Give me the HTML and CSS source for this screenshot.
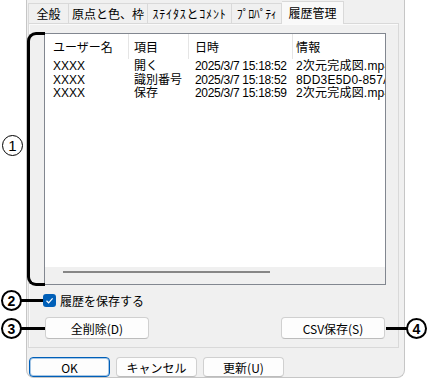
FILE: index.html
```html
<!DOCTYPE html>
<html lang="ja">
<head>
    <meta charset="UTF-8">
    <title>履歴管理</title>
    <link rel="stylesheet" href="styles.css">
</head>
<body>
    <div class="stage">
        <div class="dialog">
            <div class="tabs">
                <div class="tab">全般</div>
                <div class="tab">原点と色、枠</div>
                <div class="tab">ｽﾃｲﾀｽとｺﾒﾝﾄ</div>
                <div class="tab">ﾌﾟﾛﾊﾟﾃｨ</div>
                <div class="tab active">履歴管理</div>
            </div>
            <div class="panel">
                <div class="list">
                    <div class="row list-head">
                        <span>ユーザー名</span><span>項目</span><span>日時</span><span>情報</span>
                    </div>
                    <div class="list-body">
                        <div class="row">
                            <span>XXXX</span><span>開く</span><span class="date">2025/3/7 15:18:52</span><span>2次元完成図.mp4</span>
                        </div>
                        <div class="row">
                            <span>XXXX</span><span>識別番号</span><span class="date">2025/3/7 15:18:52</span><span>8DD3E5D0-857A-4C2B</span>
                        </div>
                        <div class="row">
                            <span>XXXX</span><span>保存</span><span class="date">2025/3/7 15:18:59</span><span>2次元完成図.mp4</span>
                        </div>
                    </div>
                    <div class="hscroll"><div class="thumb"></div></div>
                </div>
                <label class="check">
                    <span class="box">
                        <svg width="9" height="9" viewBox="0 0 9 9"><path d="M1.5 4.8 L3.6 6.8 L7.6 2.4" fill="none" stroke="#fff" stroke-width="1.2"/></svg>
                    </span>
                    履歴を保存する
                </label>
                <div class="actions">
                    <button class="btn wide">全削除(D)</button>
                    <button class="btn wide">CSV保存(S)</button>
                </div>
            </div>
            <div class="footer">
                <button class="btn default">OK</button>
                <button class="btn">キャンセル</button>
                <button class="btn">更新(U)</button>
            </div>
        </div>

        <!-- annotation marks -->
        <div class="bracket"></div>
        <span class="num thin n1">1</span>
        <span class="num n2">2</span>
        <span class="num n3">3</span>
        <span class="num n4">4</span>
        <div class="lead l2"></div>
        <div class="lead l3"></div>
        <div class="lead l4"></div>
    </div>
</body>
</html>
```

FILE: styles.css
```css
* {
    box-sizing: border-box;
}

body {
    margin: 0;
    background: #ffffff;
    font-family: "Noto Sans CJK JP", "Liberation Sans", sans-serif;
    font-size: 12px;
    color: #000;
}

.stage {
    position: relative;
    width: 430px;
    height: 379px;
    overflow: hidden;
}

.dialog {
    margin-left: 26px;
    width: 379px;
    height: 378px;
    background-color: #f0f0f0;
    border: 1px solid #c6c6c6;
    border-top: none;
    border-radius: 0 0 8px 8px;
    padding: 3px 5px 0 1px;
}

.tabs {
    display: flex;
    height: 20px;
}

.tab {
    height: 20px;
    line-height: 19px;
    text-align: center;
    white-space: nowrap;
    border: 1px solid #d9d9d9;
    border-left: none;
    border-bottom: none;
    background-color: #f0f0f0;
}

.tab:nth-child(1) { width: 41px; border-left: 1px solid #d9d9d9; }
.tab:nth-child(2) { width: 79px; }
.tab:nth-child(3) { width: 84px; letter-spacing: 0.8px; }
.tab:nth-child(4) { width: 50px; letter-spacing: -0.5px; }

.tab.active {
    width: 62px;
    height: 23px;
    margin-top: -2px;
    line-height: 22px;
    background-color: #f9f9f9;
    position: relative;
    z-index: 1;
}

.panel {
    height: 325px;
    border: 1px solid #d9d9d9;
    box-shadow: inset 1px 1px 0 #fafafa;
    padding: 9px 13px 0 15px;
}

.list {
    width: 342px;
    height: 252px;
    border: 1px solid #828790;
    background: #fff;
    display: flex;
    flex-direction: column;
    overflow: hidden;
}

.row {
    display: grid;
    grid-template-columns: 84px 60px 104px 1fr;
    white-space: nowrap;
}

.row span:nth-child(1) { padding-left: 8px; }
.row span:nth-child(2) { padding-left: 5px; }
.row span:nth-child(3) { padding-left: 6px; }
.row span:nth-child(4) { padding-left: 3px; letter-spacing: 0.2px; }

.row .date {
    letter-spacing: -0.3px;
}

.list-head {
    height: 25px;
    line-height: 25px;
}

.list-head span {
    border-right: 1px solid #e5e5e5;
}

.list-head span:last-child {
    border-right: none;
}

.list-body {
    flex: 1;
    font-family: "Liberation Sans", "Noto Sans CJK JP", sans-serif;
}

.list-body .row {
    height: 13.5px;
    line-height: 13.5px;
}

.list-body .row:first-child {
    margin-top: 1px;
}

.hscroll {
    height: 17px;
    background-color: #f0f0f0;
    padding: 4px 0 0 18px;
}

.thumb {
    width: 207px;
    height: 2px;
    background-color: #868686;
}

.check {
    display: flex;
    align-items: center;
    gap: 4px;
    height: 13px;
    margin: 9px 0 0 -1px;
}

.box {
    width: 13px;
    height: 13px;
    border-radius: 3px;
    background-color: #005fb8;
    display: flex;
    align-items: center;
    justify-content: center;
}

.actions {
    display: flex;
    justify-content: space-between;
    width: 340px;
    margin: 10px 0 0 1px;
}

.btn {
    font-family: inherit;
    font-size: 12px;
    color: #000;
    background-color: #fdfdfd;
    border: 1px solid #d0d0d0;
    border-bottom-color: #bcbcbc;
    border-radius: 4px;
    padding: 0;
    height: 20px;
    width: 81px;
}

.btn.wide {
    width: 104px;
    height: 22px;
}

.btn.default {
    border: 1px solid #005fb8;
    box-shadow: inset 0 0 0 1px rgba(0, 95, 184, 0.35);
}

.footer {
    display: flex;
    gap: 6px;
    margin: 9px 0 0 1px;
}

/* annotations */
.bracket {
    position: absolute;
    left: 27px;
    top: 32px;
    width: 18px;
    height: 254px;
    border: 3px solid #000;
    border-right: none;
    border-radius: 9px 0 0 9px;
}

.num {
    position: absolute;
    width: 21px;
    height: 21px;
    border: 2px solid #000;
    border-radius: 50%;
    display: flex;
    align-items: center;
    justify-content: center;
    font-family: "Liberation Sans", sans-serif;
    font-size: 14px;
    line-height: 14px;
    font-weight: bold;
}

.num.thin {
    border-width: 1.5px;
    font-weight: normal;
    font-size: 15px;
}

.n1 { left: 2px; top: 135px; }
.n2 { left: 1px; top: 290px; }
.n3 { left: 1px; top: 318px; }
.n4 { left: 406px; top: 318px; }

.lead {
    position: absolute;
    height: 3px;
    background: #000;
}

.l2 { left: 21px; top: 299px; width: 22px; }
.l3 { left: 21px; top: 327px; width: 24px; }
.l4 { left: 386px; top: 327px; width: 21px; }
```
